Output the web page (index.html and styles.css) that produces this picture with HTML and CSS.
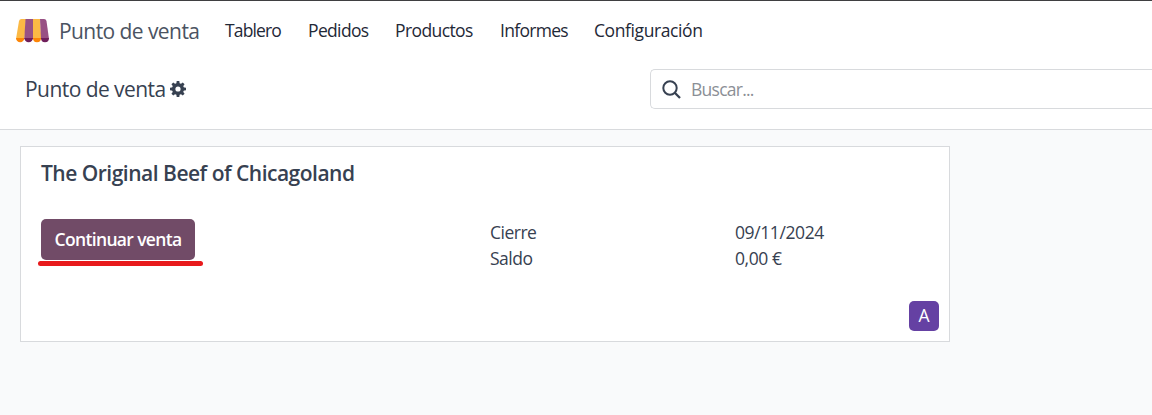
FILE: index.html
```html
<!DOCTYPE html>
<html lang="es">
<head>
<meta charset="utf-8">
<title>Punto de venta</title>
<link rel="stylesheet" href="styles.css">
</head>
<body>
<header class="header">
  <nav class="navbar">
    <svg class="logo" width="34" height="24" viewBox="0 0 34 24">
      <path fill="#fbb945" d="M5.5 0H10L8.500 20H0L3 2Q3.500 0 5.500 0Z"/>
      <path fill="#985184" d="M9.500 0H17V20H8.300Z"/>
      <path fill="#fbb945" d="M17 0H24L25.300 20H17Z"/>
      <path fill="#985184" d="M24 0H28Q30 0 30.500 2L33 20H25Z"/>
      <path fill="#fc8608" d="M0 19H8.300A4.100 4.200 0 0 1 0 19ZM17 19H25A4 4.200 0 0 1 17 19Z"/>
      <path fill="#6f1f5b" d="M8.300 19H17A4.350 4.200 0 0 1 8.300 19ZM25 19H33A4 4.200 0 0 1 25 19Z"/>
    </svg>
    <span class="brand">Punto de venta</span>
    <div class="menu">
      <a class="tablero">Tablero</a><a class="pedidos">Pedidos</a><a class="productos">Productos</a><a class="informes">Informes</a><a class="configuracion">Configuración</a>
    </div>
  </nav>
  <div class="control">
    <div class="crumb">
      <span class="crumb-text">Punto de venta</span>
      <svg class="gear" width="16" height="16" viewBox="-8 -8 16 16">
        <g fill="#374151">
          <path id="tooth" d="M-1.700-5L-1.300-8H1.300L1.700-5V5L1.300 8H-1.300L-1.700 5Z"/>
          <use href="#tooth" transform="rotate(45)"/>
          <use href="#tooth" transform="rotate(90)"/>
          <use href="#tooth" transform="rotate(135)"/>
          <circle r="6"/>
        </g>
        <circle r="2.600" fill="#fff"/>
      </svg>
    </div>
    <div class="search">
      <svg class="lens" width="20" height="20" viewBox="0 0 20 20" fill="none" stroke="#374151" stroke-width="2">
        <circle cx="8" cy="8" r="6.700"/><path d="M12.800 12.800L18 18" stroke-width="2.300"/>
      </svg>
      <span class="placeholder">Buscar...</span>
    </div>
  </div>
</header>
<main class="content">
  <section class="card">
    <h1 class="title">The Original Beef of Chicagoland</h1>
    <div class="row">
      <div class="action">
        <button class="btn">Continuar venta</button>
        <div class="underline"></div>
      </div>
      <div class="labels"><div class="cierre">Cierre</div><div class="saldo">Saldo</div></div>
      <div class="values"><div class="date">09/11/2024</div><div class="amount">0,00 €</div></div>
    </div>
    <div class="avatar">A</div>
  </section>
</main>
</body>
</html>
```
FILE: styles.css
```css
* { box-sizing: border-box; }
body {
  margin: 0;
  height: 415px;
  overflow: hidden;
  background: #f9fafb;
  color: #374151;
  font: 17.5px/26px "Segoe UI", "Open Sans", "Noto Sans", sans-serif;
  white-space: nowrap;
}
.header { height: 130px; background: #fff; border-top: 1px solid #3f3f41; border-bottom: 1px solid #d8dadd; }
.navbar { display: flex; align-items: center; height: 60px; padding-left: 16px; }
.logo { margin-right: 9px; }
.brand { width: 166px; font-size: 21px; color: #4b5362; letter-spacing: -.57px; }
.menu { display: flex; padding-bottom: 2px; color: #1f2937; }
.tablero { width: 83px; letter-spacing: -.85px; }
.pedidos { width: 87px; letter-spacing: -.65px; }
.productos { width: 105px; letter-spacing: -.6px; }
.informes { width: 94px; letter-spacing: -.7px; }
.configuracion { letter-spacing: -.4px; }
.control { display: flex; align-items: center; height: 56px; }
.crumb { display: flex; align-items: center; width: 650px; padding-left: 25px; font-size: 21px; }
.crumb-text { width: 145px; letter-spacing: -.55px; }
.search {
  display: flex; align-items: center; width: 502px; height: 40px; padding-left: 11px;
  border: 1px solid #d8dadd; border-right: 0; border-radius: 5px 0 0 5px;
}
.lens { margin-top: 2px; }
.placeholder { margin-left: 9px; color: #8b8f96; letter-spacing: -.75px; }
.content { padding: 16px 20px; }
.card { width: 930px; height: 196px; padding: 12px 10px 10px 20px; background: #fff; border: 1px solid #d8dadd; }
.title { margin: 0; font-size: 21px; line-height: 28px; font-weight: 600; letter-spacing: -.5px; }
.row { display: flex; height: 82px; margin-top: 32px; }
.action { width: 449px; }
.btn {
  display: block; width: 154px; height: 41px; padding: 0 0 2px; border: 0; border-radius: 5px;
  background: #714b67; color: #fff; font: inherit; font-weight: 600; letter-spacing: -.65px;
}
.underline { width: 165px; height: 5px; margin: 1px 0 0 -3px; border-radius: 3px; background: #e81a1c; }
.labels { width: 245px; letter-spacing: -.5px; }
.values { letter-spacing: -.4px; }
.avatar {
  width: 30px; height: 30px; margin-left: auto; border-radius: 5px;
  background: #6541a3; color: #fff; line-height: 28px; text-align: center;
}
```
